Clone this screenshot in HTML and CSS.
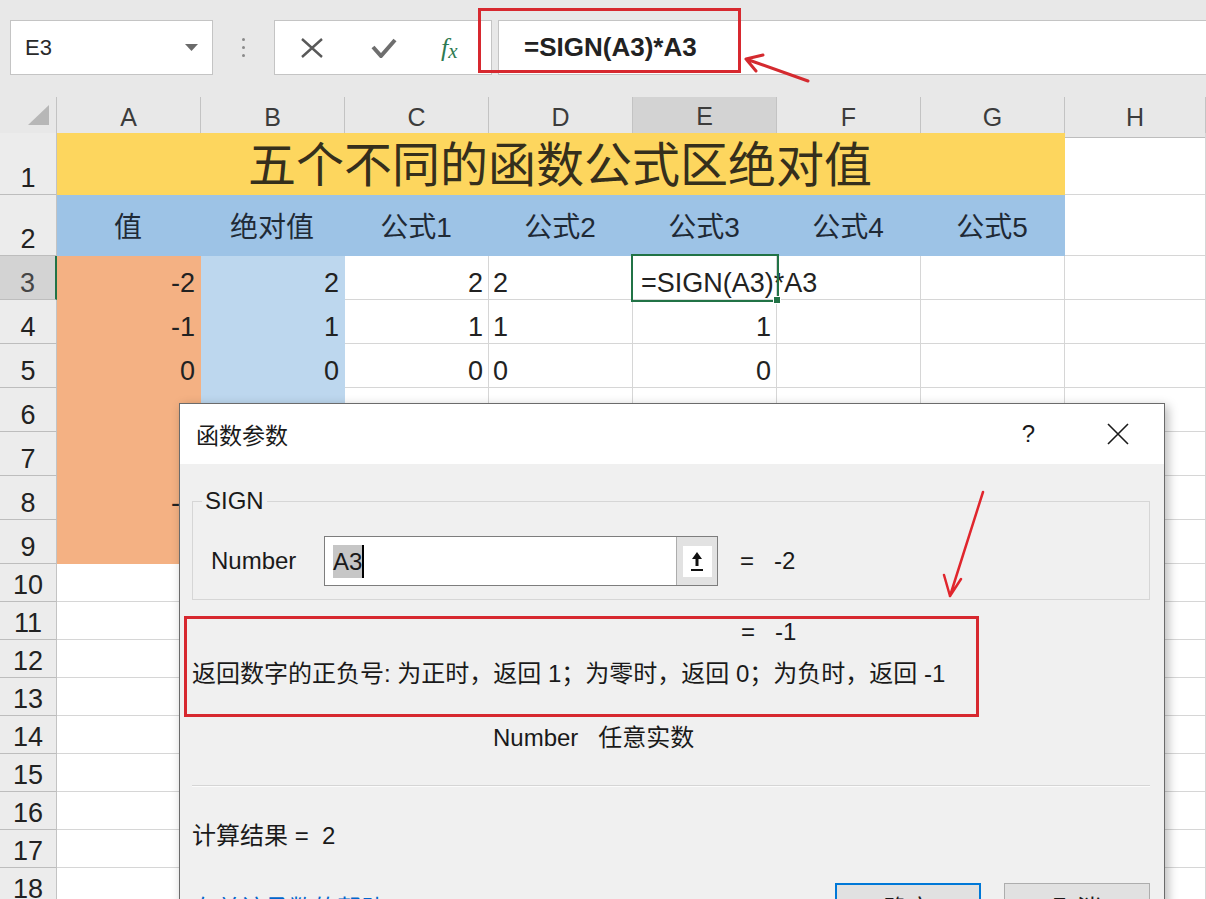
FILE: index.html
```html
<!DOCTYPE html>
<html lang="zh-CN">
<head>
    <meta charset="UTF-8">
    <title>SIGN 函数参数</title>
    <link rel="stylesheet" href="styles.css">
</head>
<body>
    <div class="toolbar">
        <div class="namebox">
            <span>E3</span>
            <svg width="13" height="7" viewBox="0 0 13 7"><path d="M0 0h13L6.5 7z" fill="#6a6a6a"/></svg>
        </div>
        <div class="grip"><i></i><i></i><i></i></div>
        <div class="fxbox">
            <svg class="tool-x" width="24" height="20" viewBox="0 0 24 20"><path d="M2 1L22 19M22 1L2 19" stroke="#595959" stroke-width="2.4" fill="none"/></svg>
            <svg class="tool-ok" width="26" height="20" viewBox="0 0 26 20"><path d="M2 9L10 18L24 2" stroke="#6e6e6e" stroke-width="4" fill="none"/></svg>
            <span class="fx">f<span>x</span></span>
        </div>
        <div class="formula">=SIGN(A3)*A3</div>
    </div>

    <div class="sheet">
        <div class="row hd">
            <div class="corner"><svg width="57" height="36" viewBox="0 0 57 36"><path d="M49 8V28H28z" fill="#b7b7b7"/></svg></div>
            <div class="col">A</div><div class="col">B</div><div class="col">C</div><div class="col">D</div>
            <div class="col active">E</div><div class="col">F</div><div class="col">G</div><div class="col">H</div>
        </div>
        <div class="row r1">
            <div class="rh">1</div>
            <div class="c title">五个不同的函数公式区绝对值</div>
            <div class="c"></div>
        </div>
        <div class="row r2">
            <div class="rh">2</div>
            <div class="c th">值</div><div class="c th">绝对值</div><div class="c th">公式1</div><div class="c th">公式2</div>
            <div class="c th">公式3</div><div class="c th">公式4</div><div class="c th">公式5</div>
            <div class="c"></div>
        </div>
        <div class="row rm">
            <div class="rh active">3</div>
            <div class="c n o">-2</div><div class="c n b">2</div><div class="c n">2</div><div class="c">2</div>
            <div class="c editing">=SIGN(A3)*A3</div><div class="c"></div><div class="c"></div><div class="c"></div>
        </div>
        <div class="row rm">
            <div class="rh">4</div>
            <div class="c n o">-1</div><div class="c n b">1</div><div class="c n">1</div><div class="c">1</div>
            <div class="c n">1</div><div class="c"></div><div class="c"></div><div class="c"></div>
        </div>
        <div class="row rm">
            <div class="rh">5</div>
            <div class="c n o">0</div><div class="c n b">0</div><div class="c n">0</div><div class="c">0</div>
            <div class="c n">0</div><div class="c"></div><div class="c"></div><div class="c"></div>
        </div>
        <div class="row rm">
            <div class="rh">6</div>
            <div class="c n o">1</div><div class="c n b">1</div><div class="c"></div><div class="c"></div>
            <div class="c"></div><div class="c"></div><div class="c"></div><div class="c"></div>
        </div>
        <div class="row rm">
            <div class="rh">7</div>
            <div class="c n o">5</div><div class="c n b">5</div><div class="c"></div><div class="c"></div>
            <div class="c"></div><div class="c"></div><div class="c"></div><div class="c"></div>
        </div>
        <div class="row rm">
            <div class="rh">8</div>
            <div class="c n o">-5</div><div class="c n b">5</div><div class="c"></div><div class="c"></div>
            <div class="c"></div><div class="c"></div><div class="c"></div><div class="c"></div>
        </div>
        <div class="row rm">
            <div class="rh">9</div>
            <div class="c n o">3</div><div class="c n b">3</div><div class="c"></div><div class="c"></div>
            <div class="c"></div><div class="c"></div><div class="c"></div><div class="c"></div>
        </div>
        <div class="row rs"><div class="rh">10</div><div class="c"></div><div class="c"></div><div class="c"></div><div class="c"></div><div class="c"></div><div class="c"></div><div class="c"></div><div class="c"></div></div>
        <div class="row rs"><div class="rh">11</div><div class="c"></div><div class="c"></div><div class="c"></div><div class="c"></div><div class="c"></div><div class="c"></div><div class="c"></div><div class="c"></div></div>
        <div class="row rs"><div class="rh">12</div><div class="c"></div><div class="c"></div><div class="c"></div><div class="c"></div><div class="c"></div><div class="c"></div><div class="c"></div><div class="c"></div></div>
        <div class="row rs"><div class="rh">13</div><div class="c"></div><div class="c"></div><div class="c"></div><div class="c"></div><div class="c"></div><div class="c"></div><div class="c"></div><div class="c"></div></div>
        <div class="row rs"><div class="rh">14</div><div class="c"></div><div class="c"></div><div class="c"></div><div class="c"></div><div class="c"></div><div class="c"></div><div class="c"></div><div class="c"></div></div>
        <div class="row rs"><div class="rh">15</div><div class="c"></div><div class="c"></div><div class="c"></div><div class="c"></div><div class="c"></div><div class="c"></div><div class="c"></div><div class="c"></div></div>
        <div class="row rs"><div class="rh">16</div><div class="c"></div><div class="c"></div><div class="c"></div><div class="c"></div><div class="c"></div><div class="c"></div><div class="c"></div><div class="c"></div></div>
        <div class="row rs"><div class="rh">17</div><div class="c"></div><div class="c"></div><div class="c"></div><div class="c"></div><div class="c"></div><div class="c"></div><div class="c"></div><div class="c"></div></div>
        <div class="row rs"><div class="rh">18</div><div class="c"></div><div class="c"></div><div class="c"></div><div class="c"></div><div class="c"></div><div class="c"></div><div class="c"></div><div class="c"></div></div>
    </div>

    <!-- 函数参数 dialog -->
    <div class="dialog">
        <div class="dlg-title">
            <span class="dlg-name">函数参数</span>
            <span class="dlg-help">?</span>
            <svg class="dlg-close" width="22" height="22" viewBox="0 0 22 22"><path d="M1 1L21 21M21 1L1 21" stroke="#1a1a1a" stroke-width="1.6" fill="none"/></svg>
        </div>
        <div class="dlg-body">
            <fieldset class="args">
                <legend>SIGN</legend>
                <div class="arg">
                    <label>Number</label>
                    <div class="ref">
                        <div class="field"><span class="sel">A3</span><span class="cursor"></span></div>
                        <div class="collapse">
                            <span><svg width="16" height="24" viewBox="0 0 16 24"><path d="M8 3L3 10H6.5V17H9.5V10H13z" fill="#111"/><rect x="2" y="20" width="12" height="2" fill="#111"/></svg></span>
                        </div>
                    </div>
                    <span class="val"><span>=</span><span>-2</span></span>
                </div>
            </fieldset>
            <div class="val result"><span>=</span><span>-1</span></div>
            <p class="desc">返回数字的正负号: 为正时，返回 1；为零时，返回 0；为负时，返回 -1</p>
            <p class="arg-help"><span>Number</span>任意实数</p>
            <hr>
            <p class="calc">计算结果 =&nbsp;&nbsp;2</p>
            <div class="dlg-foot">
                <a href="#">有关该函数的帮助(H)</a>
                <button class="btn primary">确定</button>
                <button class="btn">取消</button>
            </div>
        </div>
    </div>

    <div class="mark mark-formula"></div>
    <div class="mark mark-desc"></div>
    <svg class="arrows" width="1206" height="899" viewBox="0 0 1206 899">
        <path d="M808 81L746 59M746 59L763 55M746 59L756 71" stroke="#d42a2f" stroke-width="3" fill="none" stroke-linecap="round"/>
        <path d="M983 492L950 596M950 596L944 575M950 596L961 579" stroke="#e0262d" stroke-width="2.5" fill="none" stroke-linecap="round"/>
    </svg>
</body>
</html>
```

FILE: styles.css
```css
body {
    margin: 0;
    width: 1206px;
    height: 899px;
    overflow: hidden;
    position: relative;
    background: #fff;
    color: #222;
    font-family: "Liberation Sans", "Noto Sans CJK SC", sans-serif;
}

/* formula bar */
.toolbar {
    height: 97px;
    box-sizing: border-box;
    padding: 20px 0 0 10px;
    background: #e8e8e8;
    display: flex;
    align-items: flex-start;
}

.namebox {
    width: 203px;
    height: 55px;
    box-sizing: border-box;
    padding: 0 14px 0 14px;
    background: #fff;
    border: 1px solid #c4c4c4;
    display: flex;
    align-items: center;
    justify-content: space-between;
    font-size: 22px;
    color: #2a2a2a;
}

.grip {
    width: 61px;
    height: 55px;
    display: flex;
    flex-direction: column;
    align-items: center;
    justify-content: center;
    gap: 5px;
}

.grip i {
    width: 3px;
    height: 3px;
    border-radius: 50%;
    background: #8a8a8a;
}

.fxbox {
    width: 218px;
    height: 55px;
    box-sizing: border-box;
    background: #fff;
    border: 1px solid #c4c4c4;
    display: flex;
    align-items: center;
}

.tool-x { margin-left: 25px; }
.tool-ok { margin-left: 47px; }

.fx {
    margin-left: 44px;
    font-family: "Liberation Serif", serif;
    font-style: italic;
    font-size: 26px;
    color: #2d7a52;
}

.fx span {
    font-size: 21px;
    position: relative;
    top: 2px;
}

.formula {
    flex: 1;
    height: 55px;
    box-sizing: border-box;
    margin-left: 6px;
    padding-left: 25px;
    background: #fff;
    border: 1px solid #c4c4c4;
    border-right: none;
    display: flex;
    align-items: center;
    font-size: 26px;
    font-weight: bold;
    color: #222;
}

/* grid */
.row {
    display: grid;
    grid-template-columns: 57px repeat(7, 144px) 1fr;
}

.hd { height: 36px; }
.r1 { height: 62px; }
.r2 { height: 61px; }
.rm { height: 44px; }
.rs { height: 38px; }

.corner, .col, .rh {
    box-sizing: border-box;
    background: #e8e8e8;
    border-right: 1px solid #c3c3c3;
    border-bottom: 1px solid #bdbdbd;
}

.col {
    display: flex;
    align-items: center;
    justify-content: center;
    font-size: 25px;
    color: #3c3c3c;
}

.col.active {
    background: #d3d3d3;
    border-bottom: 2px solid #217346;
}

.rh {
    background: #ececec;
    display: flex;
    align-items: flex-end;
    justify-content: center;
    padding-bottom: 2px;
    font-size: 27px;
    line-height: 1;
    color: #222;
}

.rh.active {
    background: #d3d3d3;
    border-right: 2px solid #217346;
    color: #454545;
}

.c {
    box-sizing: border-box;
    border-right: 1px solid #d6d6d6;
    border-bottom: 1px solid #d6d6d6;
    display: flex;
    align-items: flex-end;
    padding: 0 5px 2px 4px;
    font-size: 27px;
    line-height: 1;
    white-space: nowrap;
}

.c.n { justify-content: flex-end; }

.title {
    grid-column: span 7;
    justify-content: center;
    padding-bottom: 4px;
    background: #fdd65e;
    border-color: #fdd65e;
    font-size: 48px;
    color: #352f1c;
}

.th {
    justify-content: center;
    padding-bottom: 13px;
    background: #9dc3e6;
    border-color: #9dc3e6;
    font-size: 28px;
    color: #1f2a36;
}

.o { background: #f4b183; border-color: #f4b183; }
.b { background: #bdd7ee; border-color: #bdd7ee; }

.editing {
    position: relative;
    z-index: 1;
    padding-left: 8px;
    outline: 2px solid #217346;
    font-size: 27px;
}

.editing::after {
    content: "";
    position: absolute;
    right: -5px;
    bottom: -5px;
    width: 6px;
    height: 6px;
    background: #217346;
    border: 1px solid #fff;
}

/* dialog */
.dialog {
    position: absolute;
    left: 179px;
    top: 403px;
    width: 986px;
    height: 540px;
    box-sizing: border-box;
    background: #f0f0f0;
    border: 1px solid #6b6b6b;
    box-shadow: 3px 3px 10px rgba(0, 0, 0, 0.28);
    font-size: 24px;
    color: #1a1a1a;
    z-index: 2;
}

.dlg-title {
    height: 60px;
    background: #fff;
    display: flex;
    align-items: center;
    padding-left: 16px;
}

.dlg-name { flex: 1; font-size: 23px; }

.dlg-help { margin-right: 72px; font-size: 24px; }
.dlg-close { margin-right: 35px; }

.dlg-body { padding: 22px 14px 0 12px; }

.args {
    margin: 0;
    padding: 0 16px 13px 18px;
    border: 1px solid #d6d6d6;
}

.args legend {
    margin-left: -9px;
    padding: 0 3px;
    line-height: 30px;
}

.arg {
    margin-top: 20px;
    height: 50px;
    display: flex;
    align-items: center;
}

.arg label { width: 113px; }

.ref {
    width: 394px;
    height: 50px;
    box-sizing: border-box;
    background: #fff;
    border: 1px solid #7d7d7d;
    display: flex;
}

.field {
    flex: 1;
    display: flex;
    align-items: center;
    padding-left: 8px;
}

.sel {
    background: #c6c6c6;
    line-height: 33px;
}

.cursor {
    width: 2px;
    height: 33px;
    background: #000;
}

.collapse {
    width: 40px;
    background: #e2e2e2;
    border-left: 1px solid #adadad;
    display: flex;
    align-items: center;
    justify-content: center;
}

.collapse span {
    width: 29px;
    height: 31px;
    background: #fff;
    display: flex;
    align-items: center;
    justify-content: center;
}

.val { margin-left: 22px; display: flex; gap: 20px; }

.result {
    margin: 17px 0 0 549px;
    line-height: 30px;
}

.desc {
    margin: 12px 0 0;
    line-height: 30px;
}

.arg-help {
    margin: 34px 0 0 301px;
    line-height: 30px;
}

.arg-help span { margin-right: 20px; }

.dlg-body hr {
    margin: 32px 0 0;
    border: 0;
    border-top: 1px solid #d5d5d5;
    border-bottom: 1px solid #fbfbfb;
}

.calc {
    margin: 34px 0 0;
    line-height: 30px;
}

.dlg-foot {
    margin-top: 32px;
    display: flex;
    align-items: center;
}

.dlg-foot a {
    color: #0066cc;
    text-decoration: none;
    margin-left: 1px;
}

.btn {
    width: 146px;
    height: 46px;
    background: #e1e1e1;
    border: 1px solid #adadad;
    font-family: inherit;
    font-size: 24px;
    color: #1a1a1a;
}

.btn.primary {
    margin-left: auto;
    margin-right: 23px;
    border: 2px solid #0078d7;
}

/* red annotations */
.mark {
    position: absolute;
    box-sizing: border-box;
    border: 3px solid #d7282f;
    z-index: 3;
}

.mark-formula { left: 478px; top: 8px; width: 263px; height: 65px; }
.mark-desc { left: 184px; top: 616px; width: 795px; height: 101px; }

.arrows {
    position: absolute;
    left: 0;
    top: 0;
    z-index: 4;
    pointer-events: none;
}
```
